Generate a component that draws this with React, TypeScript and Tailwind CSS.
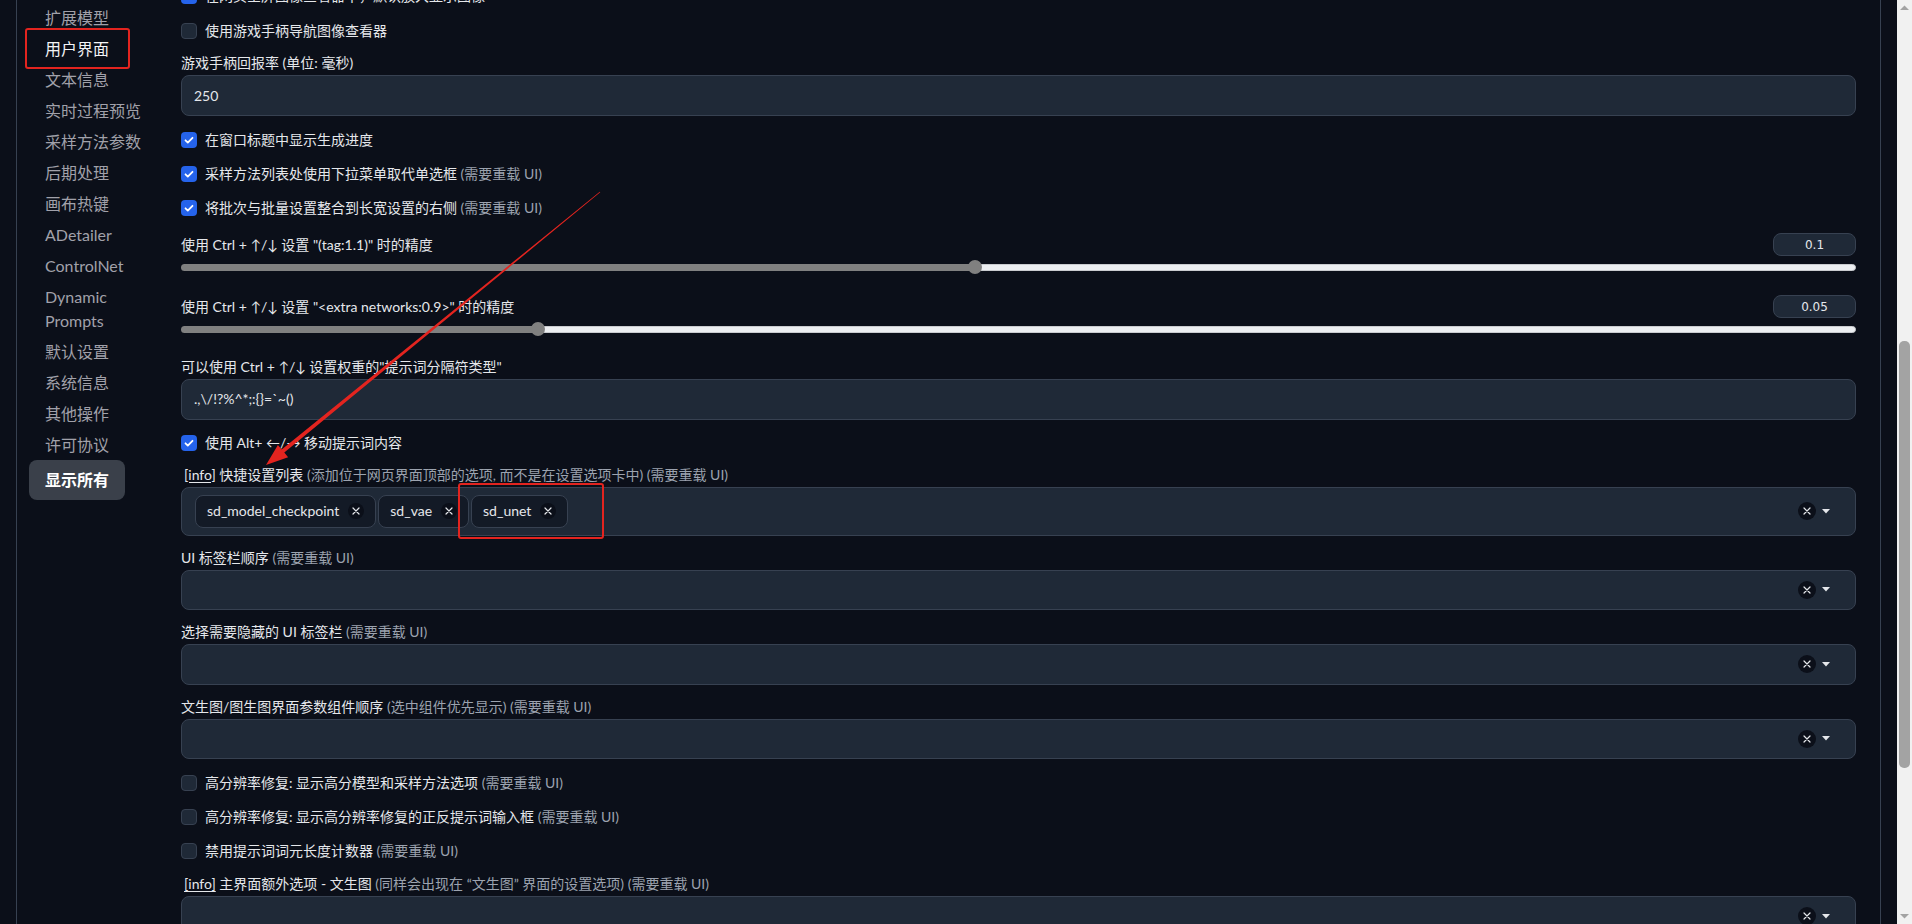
import React from "react";

const NAV = [
  "扩展模型",
  "用户界面",
  "文本信息",
  "实时过程预览",
  "采样方法参数",
  "后期处理",
  "画布热键",
  "ADetailer",
  "ControlNet",
  "Dynamic Prompts",
  "默认设置",
  "系统信息",
  "其他操作",
  "许可协议",
];

const RELOAD = "(需要重载 UI)";

const XCircle = ({ size }: { size: string }) => (
  <span className={`flex shrink-0 items-center justify-center rounded-full bg-[#0b0f19] ${size}`}>
    <svg width="8" height="8" viewBox="0 0 8 8">
      <path d="M1 1L7 7M7 1L1 7" stroke="#e5e7eb" strokeWidth="1.2" strokeLinecap="round" />
    </svg>
  </span>
);

const Check = ({
  checked,
  text,
  note,
  className = "",
}: {
  checked?: boolean;
  text: string;
  note?: string;
  className?: string;
}) => (
  <div className={`flex h-5 shrink-0 items-center ${className}`}>
    <span
      className={`flex h-4 w-4 shrink-0 items-center justify-center rounded-[4px] ${
        checked ? "bg-[#2563eb]" : "border border-[#374151] bg-[#1f2937]"
      }`}
    >
      {checked && (
        <svg width="12" height="12" viewBox="0 0 12 12">
          <path d="M2.5 6.3l2.3 2.3L9.5 3.8" stroke="#fff" strokeWidth="1.8" fill="none" strokeLinecap="round" strokeLinejoin="round" />
        </svg>
      )}
    </span>
    <span className="ml-2 whitespace-nowrap text-sm text-[#e5e7eb]">
      {text}
      {note && <span className="text-[#9ca3af]"> {note}</span>}
    </span>
  </div>
);

const Label = ({ children, className = "" }: { children: React.ReactNode; className?: string }) => (
  <div className={`h-5 shrink-0 whitespace-nowrap text-sm leading-5 text-[#e5e7eb] ${className}`}>{children}</div>
);

const Info = () => <span className="underline underline-offset-2">[info]</span>;

const DropBox = ({ children, className = "" }: { children?: React.ReactNode; className?: string }) => (
  <div className={`flex shrink-0 items-center rounded-lg border border-[#374151] bg-[#1f2937] pr-[25px] ${className}`}>
    <div className="flex flex-1 items-center gap-[2px] pl-[13px]">{children}</div>
    <XCircle size="h-[18px] w-[18px]" />
    <svg className="ml-[6px]" width="8" height="5" viewBox="0 0 8 5">
      <polygon points="0,0 8,0 4,4.5" fill="#e5e7eb" />
    </svg>
  </div>
);

const Chip = ({ text }: { text: string }) => (
  <div className="flex h-[33px] items-center gap-[9px] rounded-lg border border-[#374151] bg-[#131a26] px-[11px]">
    <span className="text-sm text-[#e5e7eb]">{text}</span>
    <XCircle size="h-4 w-4" />
  </div>
);

const Slider = ({
  label,
  value,
  fill,
  className = "",
}: {
  label: string;
  value: string;
  fill: string;
  className?: string;
}) => (
  <div className={`shrink-0 ${className}`}>
    <div className="flex h-[23px] items-center justify-between">
      <span className="whitespace-nowrap text-sm text-[#e5e7eb]">{label}</span>
      <div className="flex h-[23px] w-[83px] items-center justify-center rounded-lg border border-[#374151] bg-[#1f2937] text-[12px] text-[#e5e7eb] [font-family:'DejaVu_Sans',sans-serif]">
        {value}
      </div>
    </div>
    <div className="flex h-[22px] items-center">
      <div className="relative flex h-[7px] w-full">
        <div className={`h-full rounded-l-full bg-[#808080] ${fill}`} />
        <div className="h-full flex-1 rounded-r-full border border-[#c9cbcf] bg-[#eceef1]" />
        <div className={`absolute top-1/2 h-[14px] w-[14px] -translate-x-1/2 -translate-y-1/2 rounded-full bg-[#808080] ${fill === "w-[47.4%]" ? "left-[47.4%]" : "left-[21.3%]"}`} />
      </div>
    </div>
  </div>
);

const App = () => {
  return (
    <div className="relative flex h-[924px] w-full overflow-hidden bg-[#0b0f19] [font-family:Lato,'Noto_Sans_CJK_SC',sans-serif]">
      <div className="flex min-w-0 flex-1 pl-4 pr-4">
        <div className="flex min-w-0 flex-1 border-l border-r border-[#374151]">
          {/* sidebar */}
          <div className="w-[164px] shrink-0 pl-[12px] pt-[2px]">
            {NAV.map((item) => (
              <div
                key={item}
                className={`w-[124px] py-[3.5px] pl-4 text-base leading-6 ${
                  item === "用户界面" ? "text-[#f3f4f6]" : "text-[#a1a1aa]"
                }`}
              >
                {item}
              </div>
            ))}
            <div className="flex h-10 w-24 items-center rounded-lg bg-[#3a404a] pl-4 text-base font-bold text-white">
              显示所有
            </div>
          </div>

          {/* settings */}
          <div className="-mt-[14px] flex min-w-0 flex-1 flex-col pr-6">
            <Check checked text="在网页全屏图像查看器中，默认放大显示图像" />
            <Check text="使用游戏手柄导航图像查看器" className="mt-[14.5px]" />
            <Label className="mt-3">游戏手柄回报率 (单位: 毫秒)</Label>
            <div className="mt-[2.5px] flex h-[41px] shrink-0 items-center rounded-lg border border-[#374151] bg-[#1f2937] px-3 text-sm text-[#e5e7eb]">
              250
            </div>
            <Check checked text="在窗口标题中显示生成进度" className="mt-[14px]" />
            <Check checked text="采样方法列表处使用下拉菜单取代单选框" note={RELOAD} className="mt-[14px]" />
            <Check checked text="将批次与批量设置整合到长宽设置的右侧" note={RELOAD} className="mt-[14px]" />
            <Slider
              label={'使用 Ctrl + ↑/↓ 设置 "(tag:1.1)" 时的精度'}
              value="0.1"
              fill="w-[47.4%]"
              className="mt-[15px]"
            />
            <Slider
              label={'使用 Ctrl + ↑/↓ 设置 "<extra networks:0.9>" 时的精度'}
              value="0.05"
              fill="w-[21.3%]"
              className="mt-[17px]"
            />
            <Label className="mt-[16.5px]">可以使用 Ctrl + ↑/↓ 设置权重的"提示词分隔符类型"</Label>
            <div className="mt-[2px] flex h-[41px] shrink-0 items-center rounded-lg border border-[#374151] bg-[#1f2937] px-3 text-sm text-[#e5e7eb]">
              {".,\\/!?%^*;:{}=`~()"}
            </div>
            <Check checked text="使用 Alt+ ←/→ 移动提示词内容" className="mt-[13px]" />
            <Label className="ml-[3px] mt-3">
              <Info /> 快捷设置列表 <span className="text-[#9ca3af]">(添加位于网页界面顶部的选项, 而不是在设置选项卡中) {RELOAD}</span>
            </Label>
            <DropBox className="mt-[2px] h-[49px]">
              <Chip text="sd_model_checkpoint" />
              <Chip text="sd_vae" />
              <Chip text="sd_unet" />
            </DropBox>
            <Label className="mt-3">
              UI 标签栏顺序 <span className="text-[#9ca3af]">{RELOAD}</span>
            </Label>
            <DropBox className="mt-[2px] h-[40.5px]" />
            <Label className="mt-3">
              选择需要隐藏的 UI 标签栏 <span className="text-[#9ca3af]">{RELOAD}</span>
            </Label>
            <DropBox className="mt-[2px] h-[40.5px]" />
            <Label className="mt-3">
              文生图/图生图界面参数组件顺序 <span className="text-[#9ca3af]">(选中组件优先显示) {RELOAD}</span>
            </Label>
            <DropBox className="mt-[2px] h-[40.5px]" />
            <Check text="高分辨率修复: 显示高分模型和采样方法选项" note={RELOAD} className="mt-[14px]" />
            <Check text="高分辨率修复: 显示高分辨率修复的正反提示词输入框" note={RELOAD} className="mt-[14px]" />
            <Check text="禁用提示词词元长度计数器" note={RELOAD} className="mt-[14px]" />
            <Label className="ml-[3px] mt-[13px]">
              <Info /> 主界面额外选项 - 文生图 <span className="text-[#9ca3af]">(同样会出现在 “文生图” 界面的设置选项) {RELOAD}</span>
            </Label>
            <DropBox className="mt-[2px] h-[40px]" />
          </div>
        </div>
      </div>

      {/* scrollbar */}
      <div className="relative w-[15px] shrink-0 bg-[#f1f1f1]">
        <svg className="absolute left-[3px] top-[5px]" width="9" height="6" viewBox="0 0 9 6">
          <polygon points="0,5 9,5 4.5,0.5" fill="#a3a3a3" />
        </svg>
        <div className="absolute left-[2px] top-[341px] h-[427px] w-[11px] rounded-[5px] bg-[#a3a3a3]" />
        <svg className="absolute bottom-[5px] left-[3px]" width="9" height="6" viewBox="0 0 9 6">
          <polygon points="0,1 9,1 4.5,5.5" fill="#a3a3a3" />
        </svg>
      </div>

      {/* screenshot annotations */}
      <div className="pointer-events-none absolute left-[25px] top-[28px] h-[41px] w-[105px] rounded-[3px] border-2 border-[#e3241f]" />
      <div className="pointer-events-none absolute left-[458px] top-[483px] h-[56px] w-[146px] rounded-[3px] border-2 border-[#e3241f]" />
      <svg className="pointer-events-none absolute left-0 top-0" width="1912" height="924" viewBox="0 0 1912 924">
        <polygon
          points="600.25,192.3 599.75,191.7 281.7,449.6 277.9,444.9 266,465 288.1,457.3 284.3,452.6"
          fill="#e3241f"
        />
      </svg>
    </div>
  );
};

export default App;
